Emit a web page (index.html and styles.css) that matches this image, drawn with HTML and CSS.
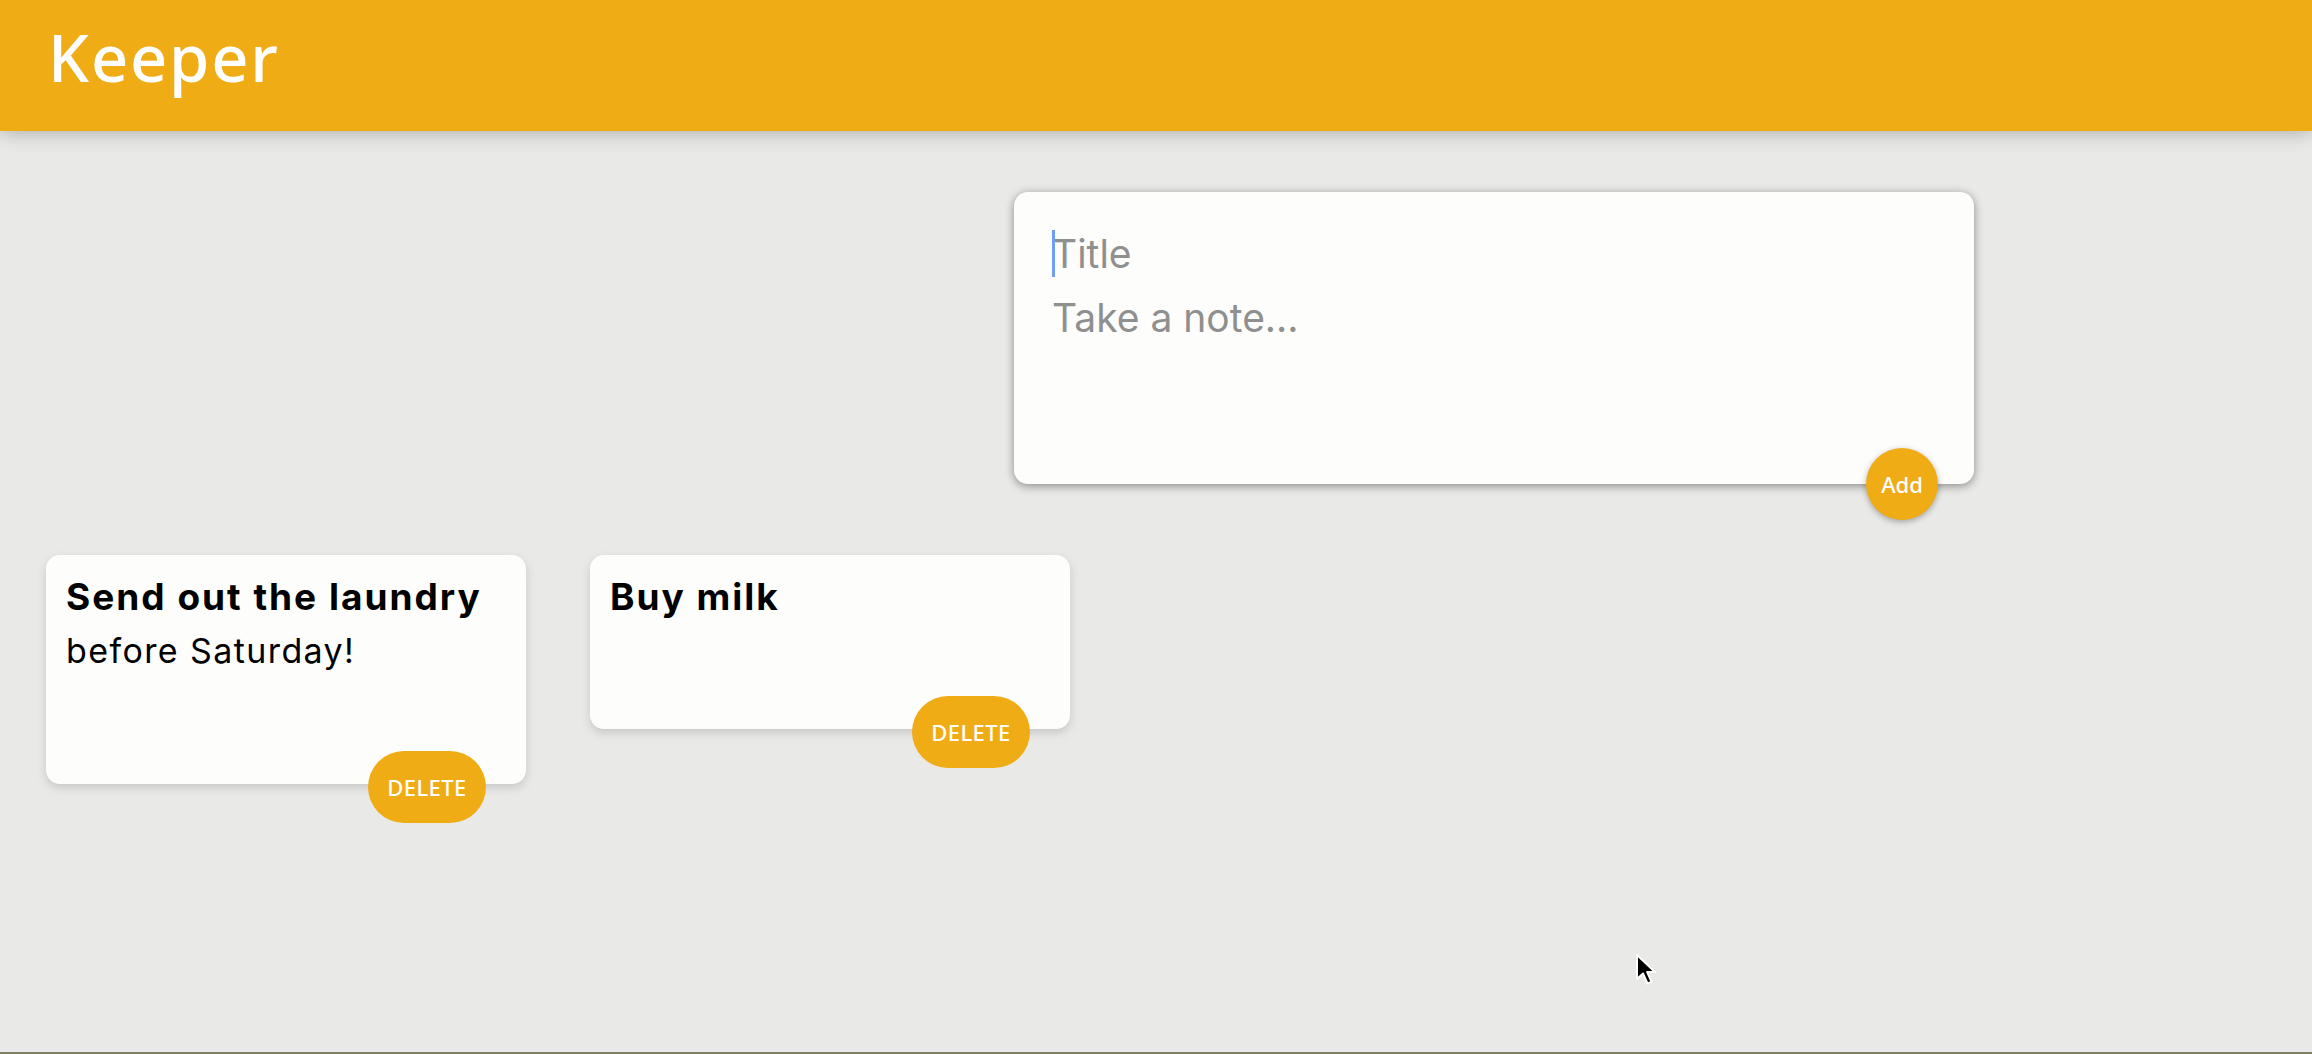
FILE: index.html
```html
<!DOCTYPE html>
<html lang="en">
<head>
<meta charset="utf-8">
<title>Keeper</title>
<link rel="stylesheet" href="styles.css">
</head>
<body>
<div class="page">
  <header class="header">
    <h1 class="logo">Keeper</h1>
  </header>
  <main class="main">
    <form class="create-note">
      <div class="title-field">
        <span class="caret"></span>
        <input class="title-input" type="text" name="title" placeholder="Title">
      </div>
      <textarea class="content-input" name="content" placeholder="Take a note..." rows="3"></textarea>
      <button class="add-btn" type="button">Add</button>
    </form>
    <section class="notes">
      <article class="note">
        <h1 class="note-title">Send out the laundry</h1>
        <p class="note-body">before Saturday!</p>
        <button class="delete-btn" type="button">DELETE</button>
      </article>
      <article class="note">
        <h1 class="note-title">Buy milk</h1>
        <button class="delete-btn" type="button">DELETE</button>
      </article>
    </section>
  </main>
  <svg class="pointer" width="24" height="32" viewBox="0 0 24 32" aria-hidden="true">
    <path d="M2 1 L2 25 L8 19.5 L12.5 29.5 L16.5 27.8 L12.2 18 L20 18 Z" fill="#000" stroke="#fff" stroke-width="2" stroke-linejoin="round"/>
  </svg>
</div>
</body>
</html>
```
FILE: styles.css
```css
* {
  box-sizing: border-box;
}

html, body {
  margin: 0;
  padding: 0;
}

body {
  background: #e9e9e7;
  font-family: Inter, "Noto Sans", sans-serif;
}

.page {
  position: relative;
  height: 1054px;
  overflow: hidden;
  border-bottom: 2px solid #7f7f66;
}

.header {
  background: #f0ac15;
  height: 131px;
  padding: 0 0 0 48px;
  box-shadow: 0 0 20px rgba(0, 0, 0, 0.3);
  display: flex;
  align-items: center;
  position: relative;
}

.logo {
  margin: 0;
  color: #fff;
  font-family: "Noto Sans", sans-serif;
  font-weight: 500;
  font-size: 65px;
  line-height: 1;
  letter-spacing: 1.8px;
  transform: translateY(-8px);
}

.main {
  padding-top: 61px;
}

.create-note {
  position: relative;
  width: 960px;
  height: 292px;
  margin-left: 1014px;
  background: #fdfdfb;
  padding: 30px;
  border-radius: 14px;
  box-shadow: 0 2px 10px rgb(138, 137, 137);
}

.title-field {
  position: relative;
}

.caret {
  position: absolute;
  left: 8px;
  top: 8px;
  width: 3px;
  height: 47px;
  background: #6e9ff3;
}

.title-input,
.content-input {
  display: block;
  width: 100%;
  border: none;
  outline: none;
  background: transparent;
  padding: 8px;
  font-family: Inter, "Noto Sans", sans-serif;
  font-size: 39px;
  color: #222;
  resize: none;
}

.title-input {
  height: 63px;
  line-height: 47px;
}

.content-input {
  height: 169px;
  line-height: 50px;
}

.title-input::placeholder,
.content-input::placeholder {
  color: #8f8f8f;
  opacity: 1;
}

.add-btn {
  position: absolute;
  right: 36px;
  bottom: -36px;
  width: 72px;
  height: 72px;
  border: none;
  border-radius: 50%;
  background: #f0ac15;
  color: #fff;
  font-family: "Noto Sans", sans-serif;
  font-size: 22px;
  font-weight: 500;
  padding: 0;
  box-shadow: 0 2px 6px rgba(0, 0, 0, 0.3);
}

.notes {
  display: flex;
  align-items: flex-start;
  gap: 64px;
  margin-top: 71px;
  padding-left: 46px;
}

.note {
  position: relative;
  width: 480px;
  background: #fdfdfb;
  border-radius: 14px;
  box-shadow: 0 4px 10px #c8c8c8;
  padding: 20px 20px 111px 20px;
}

.note-title {
  margin: 0;
  font-size: 37px;
  line-height: 43px;
  font-weight: 700;
  letter-spacing: 2px;
  color: #000;
}

.note-body {
  margin: 11px 0 0 0;
  font-size: 34px;
  line-height: 44px;
  letter-spacing: 1.4px;
  color: #000;
}

.delete-btn {
  position: absolute;
  right: 40px;
  bottom: -39px;
  width: 118px;
  height: 72px;
  border: none;
  border-radius: 36px;
  background: #f0ac15;
  color: #fff;
  font-family: "Noto Sans", sans-serif;
  font-size: 22px;
  font-weight: 500;
  letter-spacing: 0.4px;
  padding: 0;
}

.pointer {
  position: absolute;
  left: 1635px;
  top: 954px;
}
```
